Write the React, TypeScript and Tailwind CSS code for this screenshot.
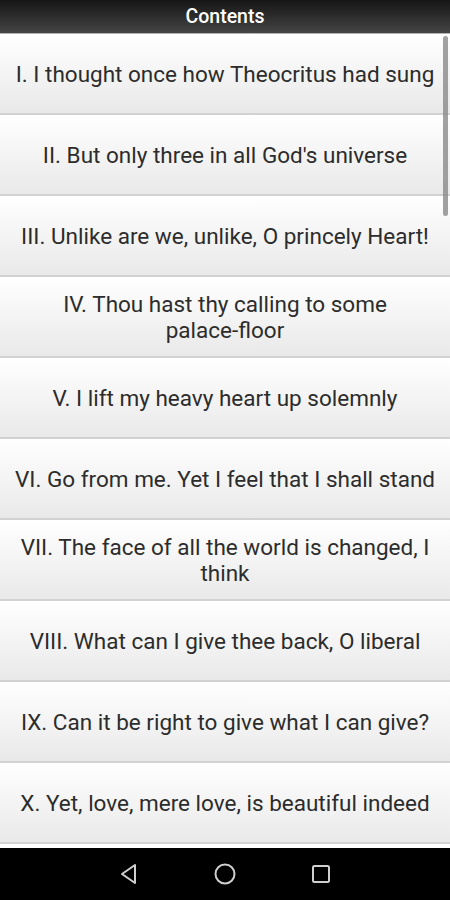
const items = [
  "I. I thought once how Theocritus had sung",
  "II. But only three in all God's universe",
  "III. Unlike are we, unlike, O princely Heart!",
  "IV. Thou hast thy calling to some palace-floor",
  "V. I lift my heavy heart up solemnly",
  "VI. Go from me. Yet I feel that I shall stand",
  "VII. The face of all the world is changed, I think",
  "VIII. What can I give thee back, O liberal",
  "IX. Can it be right to give what I can give?",
  "X. Yet, love, mere love, is beautiful indeed",
];

// keep hyphenated words like "palace-floor" on one line
function Title({ text }: { text: string }) {
  const words = text.split(" ");
  return (
    <span>
      {words.map((w, i) => (
        <span key={i} className={w.includes("-") ? "whitespace-nowrap" : ""}>
          {w}
          {i < words.length - 1 ? " " : ""}
        </span>
      ))}
    </span>
  );
}

export default function App() {
  return (
    <div className="w-[450px] h-[900px] flex flex-col bg-white overflow-hidden font-['Roboto',sans-serif]">
      {/* title bar */}
      <div className="h-[34px] shrink-0 flex items-center justify-center bg-gradient-to-b from-[#161616] to-[#454545] border-b border-[#b5b5b5]">
        <span className="text-white font-medium text-[19.5px]">Contents</span>
      </div>

      {/* list */}
      <div className="relative flex-1 flex flex-col overflow-hidden">
        {items.map((t) => (
          <div
            key={t}
            className="h-[81px] shrink-0 flex items-center justify-center px-[14px] text-center text-[22.5px] leading-[26px] text-[#2c2c2c] bg-gradient-to-b from-white to-[#e9e9e9] border-b-2 border-[#d2d2d2]"
          >
            <Title text={t} />
          </div>
        ))}
        <div className="absolute right-[2px] top-[2px] w-[5px] h-[180px] rounded-full bg-[#8a8a8a]/80" />
      </div>

      {/* nav bar */}
      <div className="h-[54px] shrink-0 bg-black flex items-center justify-center gap-[72px] border-t-2 border-white">
        <svg width="24" height="24" viewBox="0 0 24 24" fill="none" stroke="#cfcfcf" strokeWidth="2" strokeLinejoin="round">
          <path d="M18 3 L5 12 L18 21 Z" />
        </svg>
        <svg width="24" height="24" viewBox="0 0 24 24" fill="none" stroke="#cfcfcf" strokeWidth="2">
          <circle cx="12" cy="12" r="9.5" />
        </svg>
        <svg width="24" height="24" viewBox="0 0 24 24" fill="none" stroke="#cfcfcf" strokeWidth="2" strokeLinejoin="round">
          <rect x="4" y="4" width="16" height="16" rx="1.5" />
        </svg>
      </div>
    </div>
  );
}
